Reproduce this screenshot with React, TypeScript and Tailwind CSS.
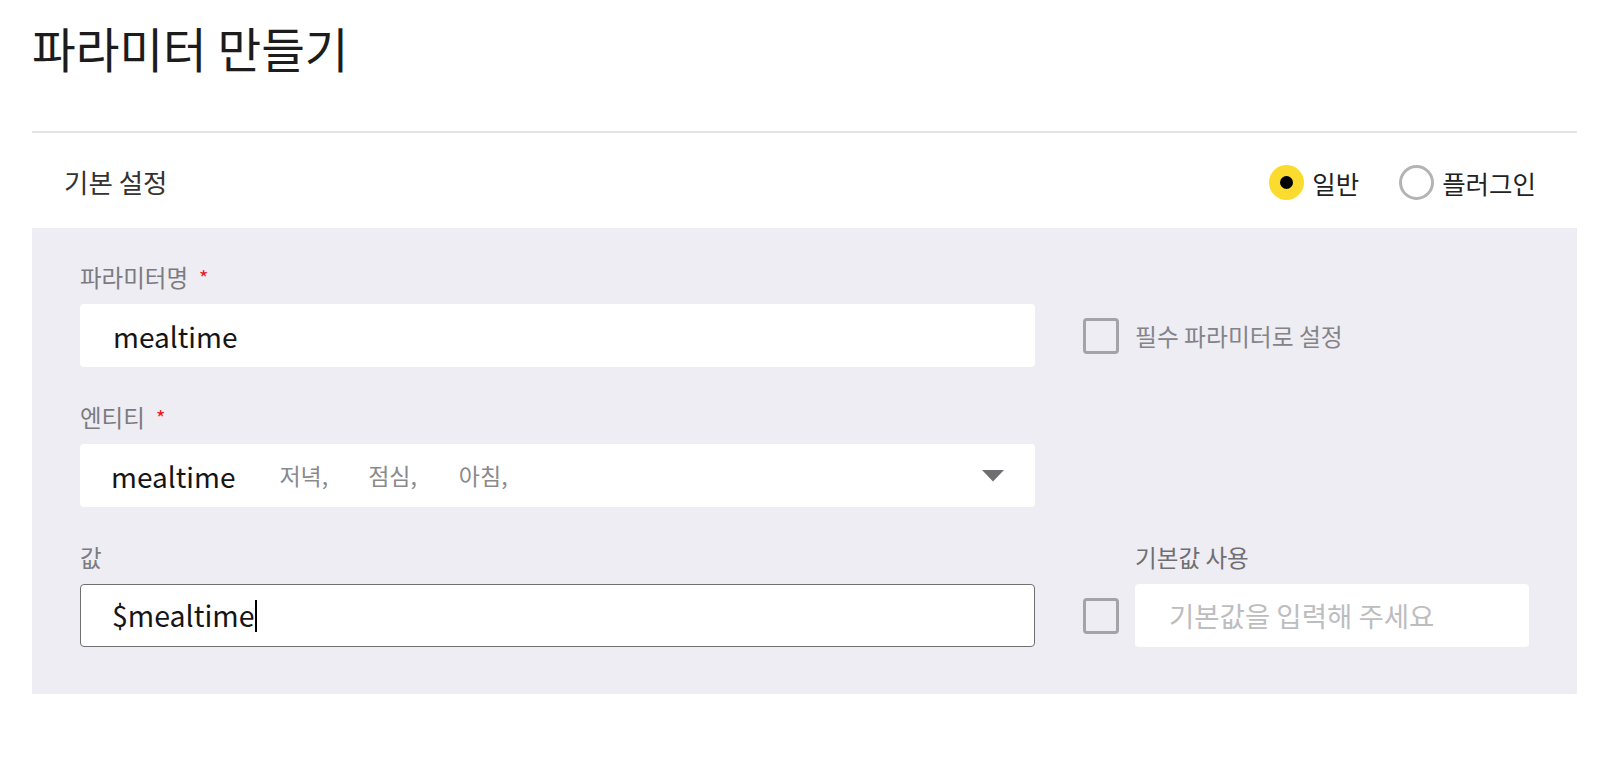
import React from "react";

const FONT = "font-['Noto_Sans_CJK_KR','Noto_Sans',sans-serif]";

const Checkbox = () => (
  <div className="h-[36px] w-[36px] shrink-0 rounded-[4px] border-[3px] border-[#a3a3a8] bg-transparent" />
);

const Radio = ({ checked, label }: { checked?: boolean; label: string }) => (
  <label className="flex items-center gap-[8px]">
    {checked ? (
      <span className="flex h-[35px] w-[35px] items-center justify-center rounded-full bg-[#fbdc2e]">
        <span className="h-[13px] w-[13px] rounded-full bg-black" />
      </span>
    ) : (
      <span className="h-[35px] w-[35px] rounded-full border-[3px] border-[#b3b3b3] bg-white" />
    )}
    <span className="text-[25.5px] leading-none text-[#222]">{label}</span>
  </label>
);

const Label = ({ text, required }: { text: string; required?: boolean }) => (
  <div className="mb-[13px] flex h-[26px] items-center text-[23.5px] leading-none text-[#7b7b7f]">
    {text}
    {required && <span className="ml-[11px] text-[20px] text-[#f01616]">*</span>}
  </div>
);

export default function App() {
  return (
    <div className={`h-[758px] w-[1600px] bg-white pl-[32px] ${FONT}`}>
      <div className="w-[1545px]">
        {/* title */}
        <h1 className="h-[131px] pt-[18px] text-[47.5px] leading-[60px] font-normal text-[#1c1c1c]">
          파라미터 만들기
        </h1>
        <div className="h-[2px] bg-[#e4e4e6]" />

        {/* section header */}
        <div className="flex h-[95px] items-center justify-between pl-[32px] pr-[41px] pt-[4px]">
          <span className="text-[26.5px] leading-none text-[#333]">기본 설정</span>
          <div className="flex items-center gap-[40px]">
            <Radio checked label="일반" />
            <Radio label="플러그인" />
          </div>
        </div>

        {/* form panel */}
        <div className="flex flex-col gap-[38px] bg-[#eeedf3] pb-[47px] pl-[48px] pt-[37px]">
          {/* parameter name */}
          <div className="flex">
            <div className="w-[955px]">
              <Label text="파라미터명" required />
              <div className="flex h-[63px] items-center rounded-[4px] bg-white pl-[33px] text-[28px] leading-none text-[#151515]">
                mealtime
              </div>
            </div>
            <div className="ml-[48px] flex flex-col">
              <div className="mb-[13px] h-[26px]" />
              <div className="flex h-[63px] items-center gap-[16px]">
                <Checkbox />
                <span className="text-[23.8px] leading-none text-[#848488]">필수 파라미터로 설정</span>
              </div>
            </div>
          </div>

          {/* entity */}
          <div className="flex">
            <div className="w-[955px]">
              <Label text="엔티티" required />
              <div className="flex h-[63px] items-center rounded-[4px] bg-white pl-[31px] pr-[31px]">
                <span className="text-[28px] leading-none text-[#151515]">mealtime</span>
                <span className="ml-[44px] text-[23px] leading-none text-[#8a8a8e]">저녁,</span>
                <span className="ml-[40px] text-[23px] leading-none text-[#8a8a8e]">점심,</span>
                <span className="ml-[42px] text-[23px] leading-none text-[#8a8a8e]">아침,</span>
                <svg className="ml-auto" width="22" height="12" viewBox="0 0 22 12">
                  <path d="M0 0 H22 L11 11.5 Z" fill="#6f6f72" />
                </svg>
              </div>
            </div>
          </div>

          {/* value */}
          <div className="flex">
            <div className="w-[955px]">
              <Label text="값" />
              <div className="flex h-[63px] items-center rounded-[4px] border-[1.5px] border-[#707070] bg-white pl-[31px] text-[28.5px] leading-none text-[#151515]">
                $mealtime
                <span className="ml-[1px] h-[32px] w-[1.5px] bg-black" />
              </div>
            </div>
            <div className="ml-[48px] flex flex-col">
              <div className="mb-[13px] flex h-[26px] items-center pl-[52px] text-[23.6px] leading-none text-[#6f6f73]">
                기본값 사용
              </div>
              <div className="flex h-[63px] items-center gap-[16px]">
                <Checkbox />
                <div className="flex h-[63px] w-[394px] items-center rounded-[4px] bg-white pl-[34px] text-[27.5px] leading-none text-[#bdbdc0]">
                  기본값을 입력해 주세요
                </div>
              </div>
            </div>
          </div>
        </div>
      </div>
    </div>
  );
}
